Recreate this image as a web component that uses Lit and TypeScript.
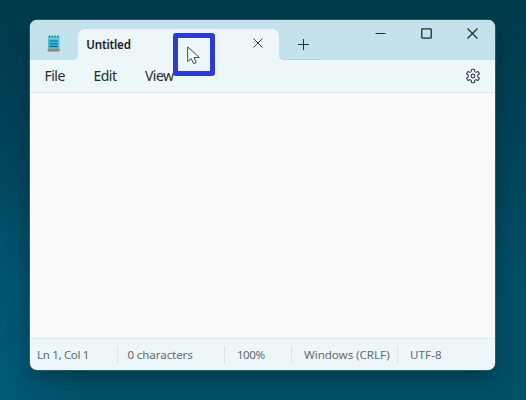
import { LitElement, html, css, svg } from "lit";
import { customElement } from "lit/decorators.js";

// Six-toothed gear outline centred on the origin
const gearPath = (() => {
  const pts: string[] = [];
  for (let i = 0; i < 6; i++) {
    const at = (deg: number, r: number) => {
      const a = ((i * 60 + deg - 90) * Math.PI) / 180;
      return `${(Math.cos(a) * r).toFixed(2)} ${(Math.sin(a) * r).toFixed(2)}`;
    };
    pts.push(`${i ? "L" : "M"}${at(-13, 6.7)}Q${at(0, 7)} ${at(13, 6.7)}L${at(17, 5.1)}Q${at(30, 4.2)} ${at(43, 5.1)}`);
  }
  return pts.join("") + "Z";
})();

@customElement("app-root")
export class AppRoot extends LitElement {
  static styles = css`
    :host {
      display: block;
      position: relative;
      width: 526px;
      height: 400px;
      box-sizing: border-box;
      padding: 20px 30px 0 30.4px;
      overflow: hidden;
      font-family: "Noto Sans", "Open Sans", sans-serif;
      background:
        radial-gradient(ellipse 90px 230px at 0 400px, #005b78 0%, #005b7800 100%),
        linear-gradient(#003b4c 0%, #004258 30%, #005068 75%, #005067 100%);
    }
    .window {
      width: 465px;
      height: 350.3px;
      display: flex;
      flex-direction: column;
      border-radius: 7px;
      overflow: hidden;
      background: #edf6f9;
      box-shadow: 0 0 0 0.6px #6d8b9499, 0 0 2px #2d4a53, 0 7px 20px #00202b80;
    }
    .titlebar {
      flex: 0 0 40px;
      display: flex;
      background: #c4e2eb;
    }
    .app { width: 47.5px; display: flex; }
    .app svg { margin: 15px 0 0 17px; }
    .tab {
      position: relative;
      width: 201px;
      height: 31px;
      margin-top: 9px;
      box-sizing: border-box;
      border-radius: 7px 7px 0 0;
      background: #edf6f9;
      display: flex;
      justify-content: space-between;
    }
    .tab::before, .tab::after {
      content: "";
      position: absolute;
      bottom: 0;
      width: 4px;
      height: 4px;
    }
    .tab::before { left: -4px; background: radial-gradient(circle at 0 0, #edf6f900 3.5px, #edf6f9 4px); }
    .tab::after { right: -4px; background: radial-gradient(circle at 100% 0, #edf6f900 3.5px, #edf6f9 4px); }
    .name {
      margin: 8px 0 0 8.4px;
      font-size: 11.6px;
      line-height: 16px;
      font-weight: 600;
      color: #1b2022;
      letter-spacing: -0.2px;
    }
    .tab svg { margin: 9px 16px 0 0; }
    .new { width: 41px; box-sizing: border-box; border-bottom: 1px solid #b4d5df; padding: 19px 0 0 19px; }
    .controls { margin-left: auto; display: flex; gap: 35px; padding: 8px 17px 0 0; }
    svg { display: block; flex: none; }
    .menu {
      flex: 0 0 32px;
      box-sizing: border-box;
      display: flex;
      padding: 0 14px;
      border-bottom: 1px solid #dde9ec;
      font-size: 14px;
      line-height: 32px;
      color: #272c2e;
    }
    .item { letter-spacing: -0.5px; white-space: nowrap; width: 49px; }
    .item:nth-child(2) { width: 51.5px; }
    .menu svg { margin: 8px 0 0 auto; }
    .editor { flex: 1; background: #f9f9f9; }
    .status {
      flex: 0 0 32px;
      box-sizing: border-box;
      border-top: 1px solid #dfeaed;
      display: grid;
      grid-template-columns: 88px 107px 67px 106px 1fr;
      align-items: center;
      font-size: 11.6px;
      color: #626c70;
      white-space: nowrap;
    }
    .cell { height: 17px; line-height: 17px; padding-left: 9px; border-right: 1px solid #d9e4e7; letter-spacing: -0.1px; }
    .cell:first-child { padding-left: 6.6px; letter-spacing: -0.35px; }
    .cell:nth-child(n + 3) { padding-left: 11.6px; }
    .cell:nth-child(3) { letter-spacing: -0.5px; }
    .cell:nth-child(4) { letter-spacing: -0.05px; }
    .cell:last-child { border: 0; letter-spacing: 0.1px; }
    .highlight {
      position: absolute;
      left: 173.3px;
      top: 33px;
      width: 42px;
      height: 43px;
      box-sizing: border-box;
      border: 5px solid #2c3bd0;
      border-radius: 3px;
    }
    .highlight svg { margin: 8px 0 0 8.7px; }
  `;

  render() {
    const cross = svg`<path d="M.5 .5L9.5 9.5M9.5 .5L.5 9.5"/>`;
    return html`
      <div class="window">
        <div class="titlebar">
          <div class="app">
            <svg width="13.4" height="18" viewBox="0 0 14 18" preserveAspectRatio="none">
              <rect x=".7" y="14" width="12.6" height="2.6" rx=".5" fill="#b97746"/>
              <rect x="1" y="1.5" width="12" height="13" rx=".6" fill="#43b9db"/>
              <path d="M1 1.5h12v3H1z" fill="#65cce5"/>
              <path d="M2.6 .4v2M5.5 .4v2M8.4 .4v2M11.3 .4v2" stroke="#28515f" stroke-width="1.1"/>
              <path d="M3 6h8M3 8.7h8M3 11.4h8" stroke="#14657f" stroke-width="1.1"/>
            </svg>
          </div>
          <div class="tab">
            <span class="name">Untitled</span>
            <svg width="10" height="10" fill="none" stroke="#333d41" stroke-width="1">${cross}</svg>
          </div>
          <div class="new">
            <svg width="11" height="11" stroke="#273236" stroke-width="1"><path d="M0 5.5h11M5.5 0v11"/></svg>
          </div>
          <div class="controls">
            <svg width="11" height="11" stroke="#273236" stroke-width="1"><path d="M.5 5.5h10"/></svg>
            <svg width="11" height="11" fill="none" stroke="#20282b" stroke-width="1.3"><rect x=".8" y=".8" width="9.4" height="9.4" rx=".8"/></svg>
            <svg width="11" height="11" viewBox="0 0 10 10" fill="none" stroke="#20282b" stroke-width="1.1">${cross}</svg>
          </div>
        </div>
        <div class="menu">
          <span class="item">File</span><span class="item">Edit</span><span class="item">View</span>
          <svg width="16" height="16" viewBox="-8 -8 16 16" fill="none" stroke="#344044" stroke-width="1.1" stroke-linejoin="round">
            <path d=${gearPath}/><circle r="1.9"/>
          </svg>
        </div>
        <div class="editor"></div>
        <div class="status">
          <span class="cell">Ln 1, Col 1</span>
          <span class="cell">0 characters</span>
          <span class="cell">100%</span>
          <span class="cell">Windows (CRLF)</span>
          <span class="cell">UTF-8</span>
        </div>
      </div>
      <div class="highlight">
        <svg width="14" height="19" viewBox="0 0 14 19">
          <path d="M.7 .9V15.6L4.2 12.5L6.6 17.7L9.2 16.5L7 11.5H12.3Z" fill="#fbfdfd" stroke="#3f494d" stroke-width="1" stroke-linejoin="round"/>
        </svg>
      </div>
    `;
  }
}
